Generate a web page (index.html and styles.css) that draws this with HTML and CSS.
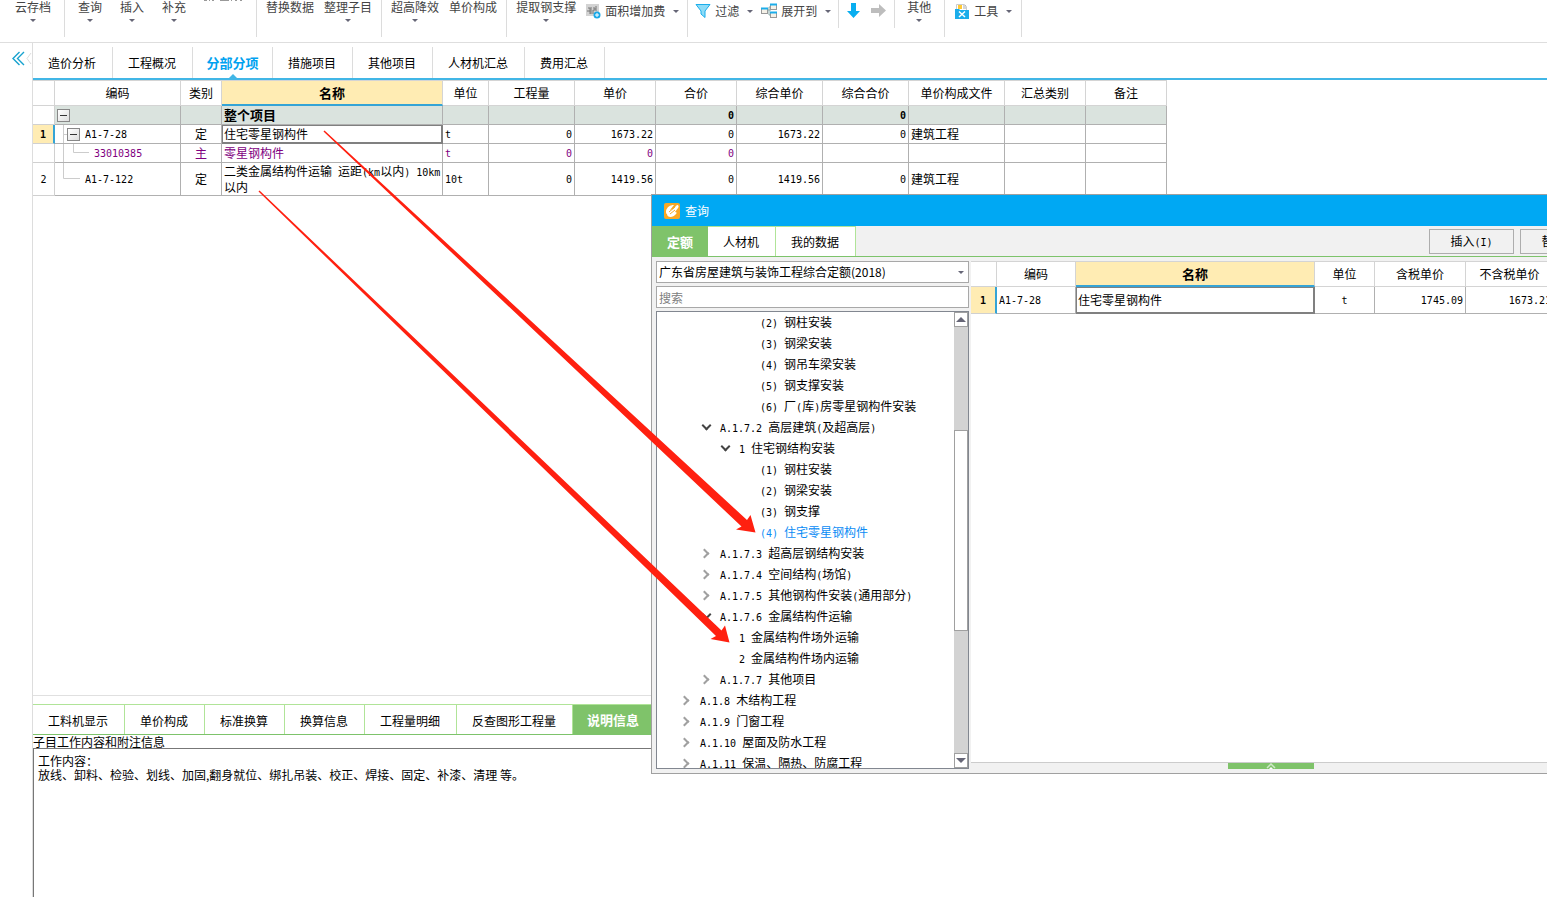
FILE: index.html
```html
<!DOCTYPE html>
<html lang="zh-CN">
<head>
<meta charset="utf-8">
<title>分部分项</title>
<link rel="stylesheet" href="styles.css">
</head>
<body>
<header class="toolbar">
  <div class="group g-archive">
    <button class="tool">云存档<span class="caret"></span></button>
  </div>
  <div class="group g-edit">
    <button class="tool">查询<span class="caret"></span></button>
    <button class="tool">插入<span class="caret"></span></button>
    <button class="tool">补充<span class="caret"></span></button>
    <svg class="cut" width="38" height="2" viewBox="0 0 38 2"><path d="M0 .5h3M5 .5h1M8 .5h2M16 .5h9M27 .5h1M31 .5h2M36 .5h2" stroke="#999"/></svg>
  </div>
  <div class="group">
    <button class="tool">替换数据</button>
    <button class="tool">整理子目<span class="caret"></span></button>
  </div>
  <div class="group">
    <button class="tool">超高降效<span class="caret"></span></button>
    <button class="tool">单价构成</button>
  </div>
  <div class="group g-steel">
    <button class="tool">提取钢支撑<span class="caret"></span></button>
    <button class="tool inline">
      <svg width="15" height="16" viewBox="0 0 15 16"><rect x="0" y="1" width="13" height="12" fill="#d3d3d3"/><path d="M2 5h2v6M5 4v7M7 5h2v2H7v4M10 3v5M1 8h3" stroke="#777" fill="none"/><circle cx="11" cy="12" r="3.5" fill="#1ba9e8"/><path d="M9 12h4M11 10v4" stroke="#fff"/></svg>
      面积增加费<span class="caret"></span></button>
  </div>
  <div class="group g-view">
    <button class="tool inline">
      <svg width="16" height="16" viewBox="0 0 16 16"><path d="M1 1.500h14L10 8v6.500L6 11V8z" fill="#8ddcf8" stroke="#1badea" stroke-linejoin="round"/></svg>
      过滤<span class="caret"></span></button>
    <button class="tool inline">
      <svg width="16" height="16" viewBox="0 0 16 16"><path d="M7 7h3M8 4v8M8 4h2M8 12h2" stroke="#8aa"/><rect x=".5" y="5.500" width="6" height="5" fill="#f5f1e8" stroke="#999"/><path d="M0 5.500h7" stroke="#1badea" stroke-width="2"/><rect x="9.500" y="1.500" width="6" height="5" fill="#f5f1e8" stroke="#999"/><path d="M9 1.500h7" stroke="#1badea" stroke-width="2"/><rect x="9.500" y="9.500" width="6" height="5" fill="#f5f1e8" stroke="#999"/><path d="M9 9.500h7" stroke="#1badea" stroke-width="2"/></svg>
      展开到<span class="caret"></span></button>
  </div>
  <div class="group g-short">
    <button class="tool inline" aria-label="下移"><svg width="13" height="16" viewBox="0 0 13 16"><path d="M4 0h5v8h4l-6.500 7L0 8h4z" fill="#08aef0"/></svg></button>
    <button class="tool inline" aria-label="右移"><svg width="15" height="16" viewBox="0 0 15 16"><path d="M0 5h8V1l7 6.500-7 6.500v-4H0z" fill="#bdbdbd"/></svg></button>
  </div>
  <div class="group g-other">
    <button class="tool">其他<span class="caret"></span></button>
  </div>
  <div class="group">
    <button class="tool inline">
      <svg width="16" height="16" viewBox="0 0 16 16"><path d="M2.500 8V1.500h8l2 2V8" fill="#fff" stroke="#ccc"/><path d="M4 2h4v4H4z" fill="#ffc933"/><path d="M9 3h3M9 5h3" stroke="#aaa"/><path d="M1 6h4l1 1h9v9H1z" fill="#1badea"/><path d="M5 8.500l6 5.500M11 8.500L5 14" stroke="#fff" stroke-width="1.500"/></svg>
      工具<span class="caret"></span></button>
  </div>
</header>

<div class="workspace">
  <aside class="gutter">
    <button class="collapse" aria-label="收起"><svg width="20" height="16" viewBox="0 0 20 16"><path d="M7.500 1L1 7.500 7.500 14M12 1L5.500 7.500 12 14" fill="none" stroke="#17a2cf" stroke-width="1.400"/><path d="M19 2l-4 5.500 4 5.500" fill="none" stroke="#ddd"/></svg></button>
  </aside>
  <main class="main">
    <nav class="tabs">
      <button class="tab">造价分析</button>
      <button class="tab">工程概况</button>
      <button class="tab current">分部分项</button>
      <button class="tab">措施项目</button>
      <button class="tab">其他项目</button>
      <button class="tab">人材机汇总</button>
      <button class="tab">费用汇总</button>
    </nav>

    <table class="grid bill">
      <colgroup><col class="w22"><col class="w126"><col class="w41"><col class="w221"><col class="w46"><col class="w86"><col class="w81"><col class="w81"><col class="w86"><col class="w86"><col class="w96"><col class="w81"><col class="w81"></colgroup>
      <thead>
        <tr><th></th><th>编码</th><th>类别</th><th class="picked">名称</th><th>单位</th><th>工程量</th><th>单价</th><th>合价</th><th>综合单价</th><th>综合合价</th><th>单价构成文件</th><th>汇总类别</th><th>备注</th></tr>
      </thead>
      <tbody>
        <tr class="root">
          <td class="no"></td>
          <td class="code"><div class="node root-node"><button class="toggle" aria-label="折叠"></button></div></td>
          <td></td><td>整个项目</td><td></td><td></td><td></td><td class="num">0</td><td></td><td class="num">0</td><td></td><td></td><td></td>
        </tr>
        <tr>
          <td class="no on">1</td>
          <td class="code"><div class="node"><svg width="12" height="18" viewBox="0 0 12 18"><path d="M8.500 0v18M8.500 9.500H12" stroke="#ccc" fill="none"/></svg><button class="toggle" aria-label="折叠"></button><span class="n after">A1-7-28</span></div></td>
          <td class="mid">定</td><td class="focus">住宅零星钢构件</td><td class="n">t</td><td class="num">0</td><td class="num">1673.22</td><td class="num">0</td><td class="num">1673.22</td><td class="num">0</td><td>建筑工程</td><td></td><td></td>
        </tr>
        <tr class="material">
          <td class="no"></td>
          <td class="code"><div class="node"><svg width="39" height="18" viewBox="0 0 39 18"><path d="M8.500 0v18M18.500 0v8.500H34" stroke="#ccc" fill="none"/></svg><span class="n">33010385</span></div></td>
          <td class="mid">主</td><td>零星钢构件</td><td class="n">t</td><td class="num">0</td><td class="num">0</td><td class="num">0</td><td></td><td></td><td></td><td></td><td></td>
        </tr>
        <tr class="tall">
          <td class="no">2</td>
          <td class="code"><div class="node"><svg width="30" height="32" viewBox="0 0 30 32"><path d="M8.500 0v15.500H25" stroke="#ccc" fill="none"/></svg><span class="n">A1-7-122</span></div></td>
          <td class="mid">定</td><td>二类金属结构件运输<span class="n"> </span>运距<span class="n">(km</span>以内<span class="n">) 10km</span><br>以内</td><td class="n">10t</td><td class="num">0</td><td class="num">1419.56</td><td class="num">0</td><td class="num">1419.56</td><td class="num">0</td><td>建筑工程</td><td></td><td></td>
        </tr>
      </tbody>
    </table>

    <div class="spacer"></div>

    <section class="detail">
      <nav class="subtabs">
        <button class="subtab">工料机显示</button>
        <button class="subtab">单价构成</button>
        <button class="subtab">标准换算</button>
        <button class="subtab">换算信息</button>
        <button class="subtab">工程量明细</button>
        <button class="subtab">反查图形工程量</button>
        <button class="subtab current">说明信息</button>
      </nav>
      <label class="note-label" for="note">子目工作内容和附注信息</label>
      <textarea id="note" class="note">工作内容：
放线、卸料、检验、划线、加固,翻身就位、绑扎吊装、校正、焊接、固定、补漆、清理 等。</textarea>
    </section>
  </main>
</div>

<section class="dialog" role="dialog" aria-label="查询">
  <div class="titlebar">
    <svg width="16" height="16" viewBox="0 0 16 16"><rect width="16" height="16" rx="2" fill="#f9a825"/><path d="M2 8c1-4 4-6 8-6L6 7l3-1 4-4c2 0 2 2 1 3l-3 4c2 0 2 1 1 2-3 4-9 4-9 0-1 0-1-2-1-3z" fill="#fff"/><path d="M5 9l6-5M6 11l5-4" stroke="#f9a825"/></svg>
    查询
  </div>
  <div class="dialog-bar">
    <nav class="dtabs">
      <button class="dtab current">定额</button>
      <button class="dtab">人材机</button>
      <button class="dtab">我的数据</button>
    </nav>
    <div class="actions">
      <button class="action">插入<span class="n">(I)</span></button>
      <button class="action">替换<span class="n">(R)</span></button>
    </div>
  </div>
  <div class="dialog-body">
    <div class="finder">
      <div class="combo">
        <select class="field" aria-label="定额库"><option>广东省房屋建筑与装饰工程综合定额(2018)</option></select>
      </div>
      <input class="field" type="text" placeholder="搜索" aria-label="搜索">
      <div class="tree-box">
        <ul class="tree">
          <li class="l4"><span class="n">(2) </span>钢柱安装</li>
          <li class="l4"><span class="n">(3) </span>钢梁安装</li>
          <li class="l4"><span class="n">(4) </span>钢吊车梁安装</li>
          <li class="l4"><span class="n">(5) </span>钢支撑安装</li>
          <li class="l4"><span class="n">(6) </span>厂<span class="n">(</span>库<span class="n">)</span>房零星钢构件安装</li>
          <li class="l2 open"><span class="n">A.1.7.2 </span>高层建筑<span class="n">(</span>及超高层<span class="n">)</span></li>
          <li class="l3 open"><span class="n">1 </span>住宅钢结构安装</li>
          <li class="l4"><span class="n">(1) </span>钢柱安装</li>
          <li class="l4"><span class="n">(2) </span>钢梁安装</li>
          <li class="l4"><span class="n">(3) </span>钢支撑</li>
          <li class="l4 chosen"><span class="n">(4) </span>住宅零星钢构件</li>
          <li class="l2 shut"><span class="n">A.1.7.3 </span>超高层钢结构安装</li>
          <li class="l2 shut"><span class="n">A.1.7.4 </span>空间结构<span class="n">(</span>场馆<span class="n">)</span></li>
          <li class="l2 shut"><span class="n">A.1.7.5 </span>其他钢构件安装<span class="n">(</span>通用部分<span class="n">)</span></li>
          <li class="l2 open"><span class="n">A.1.7.6 </span>金属结构件运输</li>
          <li class="l3"><span class="n">1 </span>金属结构件场外运输</li>
          <li class="l3"><span class="n">2 </span>金属结构件场内运输</li>
          <li class="l2 shut"><span class="n">A.1.7.7 </span>其他项目</li>
          <li class="l1 shut"><span class="n">A.1.8 </span>木结构工程</li>
          <li class="l1 shut"><span class="n">A.1.9 </span>门窗工程</li>
          <li class="l1 shut"><span class="n">A.1.10 </span>屋面及防水工程</li>
          <li class="l1 shut"><span class="n">A.1.11 </span>保温、隔热、防腐工程</li>
        </ul>
        <div class="scrollbar">
          <span class="step up"></span>
          <span class="before"></span>
          <span class="thumb"></span>
          <span class="rest"></span>
          <span class="step down"></span>
        </div>
      </div>
    </div>
    <div class="results">
      <div class="results-pane">
        <table class="grid found">
          <colgroup><col class="w25"><col class="w79"><col class="w239"><col class="w60"><col class="w91"><col class="w88"></colgroup>
          <thead><tr><th></th><th>编码</th><th class="picked">名称</th><th>单位</th><th>含税单价</th><th>不含税单价</th></tr></thead>
          <tbody><tr><td class="no on">1</td><td class="n">A1-7-28</td><td class="focus">住宅零星钢构件</td><td class="n mid">t</td><td class="num">1745.09</td><td class="num">1673.21</td></tr></tbody>
        </table>
      </div>
      <button class="handle" aria-label="展开"><svg width="10" height="6" viewBox="0 0 10 6"><path d="M1 5l4-4 4 4" fill="none" stroke="#cfe8c8" stroke-width="1.500"/><path d="M3 6l2-2 2 2z" fill="#fff"/></svg></button>
    </div>
  </div>
</section>

<svg class="marks" width="1547" height="897" viewBox="0 0 1547 897" aria-hidden="true">
  <path fill="#ff2010" d="M324.500 130.500L747 520l3.500-5 5 17.500L736 529.500l5.500-3L323.500 131.500z"/>
  <path fill="#ff2010" d="M259.500 190.500L721.500 630.500l3.500-5 4.500 17L710.500 639l5.500-3L258.500 191.500z"/>
</svg>
</body>
</html>
```

FILE: styles.css
```css
*, *::before, *::after { box-sizing: border-box; }

body {
  margin: 0;
  height: 100vh;
  display: flex;
  flex-direction: column;
  position: relative;
  overflow: hidden;
  background: #fff;
  color: #000;
  font: 12px/14px "Noto Sans CJK SC", sans-serif;
}

button, input, select, textarea { font: inherit; color: inherit; }
button { border: 0; padding: 0; background: none; white-space: nowrap; }
svg { display: block; flex: none; }

.n, .num, .no { font-family: "DejaVu Sans Mono", "Noto Sans CJK SC", monospace; font-size: 10px; white-space: pre; }

/* toolbar */
.toolbar { display: flex; flex: none; height: 43px; border-bottom: 1px solid #dedede; color: #444; }
.group { display: flex; align-items: flex-start; gap: 10px; height: 37px; padding: 0 9px; border-right: 1px solid #dcdcdc; }
.g-archive { padding: 0 13px 0 15px; }
.g-edit { gap: 18px; padding: 0 14px 0 13px; }
.g-steel { padding-right: 8px; }
.g-view { gap: 8px; padding: 0 7px; border-right: 0; }
.g-short { gap: 11px; height: 28px; padding: 0 8px; border-left: 1px solid #dcdcdc; }
.g-other { padding: 0 13px 0 12px; }
.tool { display: flex; flex-direction: column; align-items: center; gap: 5px; }
.tool.inline { flex-direction: row; padding-top: 3px; gap: 4px; }
.tool.inline .caret { margin-left: 4px; }
.caret { border: 3px solid transparent; border-top-color: #667; border-bottom: 0; }

/* workspace */
.workspace { flex: 1; display: flex; min-height: 0; }
.gutter { flex: none; width: 32px; padding: 8px 0 0 12px; }
.main { flex: 1; min-width: 0; display: flex; flex-direction: column; border-left: 1px solid #ddd; }
.tabs { display: flex; align-items: flex-end; flex: none; height: 37px; border-bottom: 2px solid #41b6e6; }
.tab { position: relative; height: 31px; padding: 0 16px 0 15px; border-right: 1px solid #dcdcdc; line-height: 30px; min-width: 80px; }
.tab.current { padding: 0 13px; font-weight: bold; font-size: 13px; color: #00a2f0; }
.tab.current::after { content: ""; position: absolute; left: 50%; bottom: 0; margin-left: -4px; border: 4px solid transparent; border-bottom-color: #41b6e6; border-top: 0; }

/* data grids */
.grid { border-collapse: separate; border-spacing: 0; table-layout: fixed; flex: none; width: 0; }
.grid th { height: 26px; padding: 0; font-weight: normal; border: 1px solid #d4d4d4; border-left: 0; }
.grid th.picked { background: #ffecb3; font-weight: bold; font-size: 13px; border-bottom: 2px solid #35a4d6; }
.grid td { height: 19px; padding: 0 2px; border: 1px solid #b0b0b0; border-top: 0; border-left: 0; white-space: nowrap; }
.grid td.code { padding: 0; }
.grid td.num, .grid td.n { padding-top: 2px; }
.grid td.num { text-align: right; }
.grid td.mid { text-align: center; }
.grid td.no { padding: 1px 0 0; text-align: center; border-color: #d0d0d0; }
.grid td.no.on { background: #ffecb3; font-weight: bold; border-right: 2px solid #35a4d6; }
.grid td.focus { box-shadow: inset 0 0 0 1px #808080; border-color: #808080; }
.grid tr.root td { background: #dae3de; font-weight: bold; font-size: 13px; }
.grid tr.root td.no { background: #fff; }
.grid tr.root td.num { font-size: 10px; }
.grid tr.material { color: #800080; }
.grid tr.tall td { height: 33px; }
.grid.found td { height: 27px; }
.w22 { width: 22px; } .w25 { width: 26px; } .w41 { width: 41px; } .w46 { width: 46px; }
.w60 { width: 60px; } .w79 { width: 79px; } .w81 { width: 81px; } .w86 { width: 86px; }
.w88 { width: 88px; } .w91 { width: 91px; } .w96 { width: 96px; } .w126 { width: 126px; }
.w221 { width: 221px; } .w239 { width: 239px; }
.node { display: flex; align-items: center; }
.node .n { padding-top: 2px; }
.root-node { padding-left: 2px; }
.after { margin-left: 5px; }
.toggle { width: 13px; height: 13px; border: 1px solid #888; background: linear-gradient(#333, #333) center / 7px 1px no-repeat, linear-gradient(135deg, #fff, #ddd); }

.spacer { flex: 1; }

/* lower detail pane */
.detail { flex: none; display: flex; flex-direction: column; height: 202px; padding-top: 8px; border-top: 1px solid #e0e0e0; }
.subtabs { display: flex; flex: none; height: 31px; border-top: 1px solid #b0e498; border-bottom: 1px solid #7dc36b; }
.subtab { padding: 2px 16px 0 15px; border-right: 1px solid #b0e498; }
.subtab.current { padding: 0 14px; border: 0; background: #7fc36a; color: #fff; font-weight: bold; font-size: 13px; }
.note-label { flex: none; line-height: 13px; }
.note { flex: 1; resize: none; margin: 0; padding: 5px 4px; border: 1px solid #777; border-bottom: 0; border-right: 0; outline: 0; line-height: 14px; }

/* query dialog */
.dialog { position: absolute; left: 651px; top: 194px; right: 0; border: 1px solid #a0a0a0; border-right: 0; background: #f1f1f1; overflow: hidden; }
.titlebar { display: flex; align-items: center; gap: 5px; height: 31px; padding-left: 12px; background: #00a8f3; color: #fff; }
.dialog-bar { display: flex; height: 31px; border-bottom: 1px solid #7dc36b; }
.dtabs { display: flex; flex: 1; }
.dtab { padding: 1px 16px 0 15px; background: #fff; border: 1px solid #b0e498; border-left: 0; border-bottom: 0; }
.dtab.current { padding: 1px 15px 0; border: 0; background: #7fc36a; color: #fff; font-weight: bold; font-size: 13px; }
.actions { display: flex; gap: 6px; flex: none; margin-right: -58px; padding: 3px 0 2px; }
.action { width: 85px; border: 1px solid #adadad; background: #f1f1f1; }
.dialog-body { display: flex; padding: 4px 0; }
.finder { flex: none; width: 317px; padding-left: 4px; display: flex; flex-direction: column; gap: 3px; }
.field { display: block; height: 22px; padding: 0 2px; border: 1px solid #a8a8a8; border-radius: 0; background: #fff; outline: 0; width: 100%; }
.combo { position: relative; }
.combo .field { appearance: none; }
.combo::after { content: ""; position: absolute; right: 5px; top: 10px; border: 3px solid transparent; border-top-color: #667; border-bottom: 0; pointer-events: none; }
.field::placeholder { color: #808080; opacity: 1; }
.tree-box { display: flex; height: 458px; border: 1px solid #828790; background: #fff; overflow: hidden; }
.tree { flex: 1; margin: -1px 0 0; padding: 0; list-style: none; overflow: hidden; }
.tree li { position: relative; line-height: 21px; height: 21px; white-space: pre; }
.tree .l1 { padding-left: 43px; }
.tree .l2 { padding-left: 63px; }
.tree .l3 { padding-left: 82px; }
.tree .l4 { padding-left: 103px; }
.tree .chosen { color: #0a8cf5; }
.open::before, .shut::before { content: ""; position: absolute; width: 7px; height: 7px; margin-left: -19px; top: 8px; border: solid #a0a0a0; border-width: 2px 2px 0 0; transform: rotate(45deg); }
.open::before { margin-left: -17px; top: 6px; border-color: #444; transform: rotate(135deg); }
.scrollbar { flex: none; display: flex; flex-direction: column; width: 14px; background: #d3d3d3; }
.step { display: flex; align-items: center; justify-content: center; height: 15px; border: 1px solid #a0a0a0; background: #fff; }
.step::before { content: ""; border: 5px solid transparent; }
.up::before { border-bottom-color: #667; border-top: 0; }
.down::before { border-top-color: #667; border-bottom: 0; }
.before { flex: 103; }
.thumb { flex: 200; border: 1px solid #a0a0a0; background: #fff; }
.rest { flex: 123; }
.results { flex: 1; min-width: 0; margin-left: 2px; height: 508px; display: flex; flex-direction: column; }
.results-pane { flex: none; height: 502px; border-bottom: 1px solid #ccc; background: #fff; overflow: hidden; }
.handle { margin-left: 257px; width: 86px; height: 6px; display: flex; justify-content: center; background: #7fc36a; }

.marks { position: absolute; left: 0; top: 0; pointer-events: none; }
```
